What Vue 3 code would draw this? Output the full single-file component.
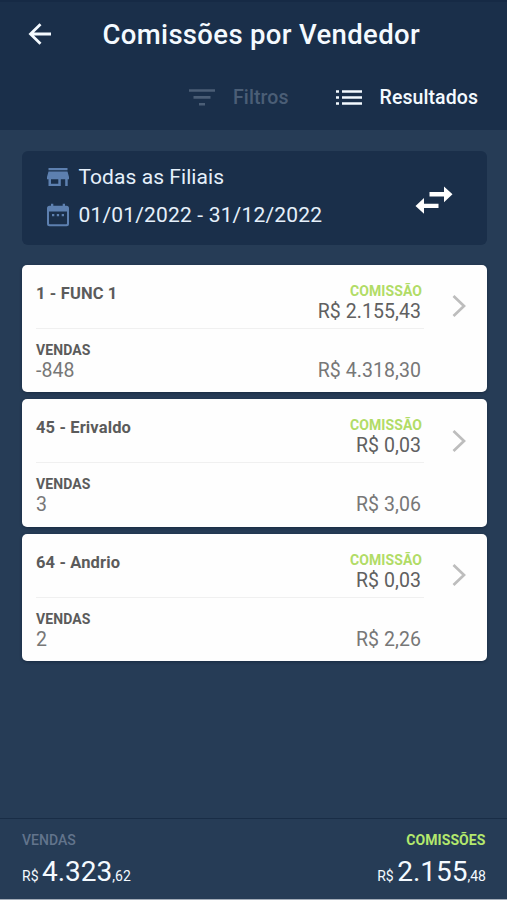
<script setup>
const sellers = [
  { name: '1 - FUNC 1', commission: 'R$ 2.155,43', count: '-848', total: 'R$ 4.318,30' },
  { name: '45 - Erivaldo', commission: 'R$ 0,03', count: '3', total: 'R$ 3,06' },
  { name: '64 - Andrio', commission: 'R$ 0,03', count: '2', total: 'R$ 2,26' },
]
</script>

<template>
  <div class="screen">
    <header class="header">
      <div class="titlebar">
        <svg class="back" viewBox="0 0 24 22" width="24" height="22">
          <path d="M12.5 1.2 2.5 11l10 9.8M2.5 11H23" fill="none" stroke="currentColor" stroke-width="2.8" />
        </svg>
        <h1 class="title">Comissões por Vendedor</h1>
      </div>
      <nav class="tabs">
        <div class="tab muted">
          <svg class="filter" viewBox="0 0 26 17" width="26" height="17">
            <path d="M0 1.5h26M4.5 8.4h17M10 15.3h6" fill="none" stroke="currentColor" stroke-width="2.6" />
          </svg>
          <span class="filter-label">Filtros</span>
        </div>
        <div class="tab">
          <svg class="list" viewBox="0 0 26 15" width="26" height="15">
            <path d="M0 1.5h3M6 1.5h20M0 7.5h3M6 7.5h20M0 13.5h3M6 13.5h20" fill="none" stroke="currentColor" stroke-width="2.7" />
          </svg>
          <span class="results-label">Resultados</span>
        </div>
      </nav>
    </header>

    <main class="content">
      <section class="summary">
        <div class="criteria">
          <div class="criterion">
            <svg viewBox="0 0 22 24" width="22" height="24">
              <path fill="currentColor" d="M1.5 3h19v2.2h-19zM1.5 6.5h19L22 12v2.2h-1.3V21h-2.5v-6.8h-4.4V21H1.5v-6.8H0V12zM4 14.2v4.5h7.3v-4.5z" fill-rule="evenodd" />
            </svg>
            <span class="branch">Todas as Filiais</span>
          </div>
          <div class="criterion">
            <svg viewBox="0 0 22 24" width="22" height="24">
              <path fill="currentColor" fill-rule="evenodd" d="M4 .8h2.3v2h9.4v-2H18v2h1.5A2.5 2.5 0 0 1 22 5.3v15.4a2.5 2.5 0 0 1-2.5 2.5h-17A2.5 2.5 0 0 1 0 20.7V5.3a2.5 2.5 0 0 1 2.5-2.5H4zM2 8.5v11.7c0 .6.4 1 1 1h16c.6 0 1-.4 1-1V8.5z" />
              <path fill="currentColor" d="M5 11h2.3v2.3H5zM9.8 11h2.3v2.3H9.8zM14.7 11H17v2.3h-2.3z" />
            </svg>
            <span class="period">01/01/2022 - 31/12/2022</span>
          </div>
        </div>
        <svg class="swap" viewBox="0 0 38 28" width="38" height="28">
          <path fill="#fff" d="M14.5 6.1H29V.4l8.5 7.9-8.5 7.900v-5.700H14.500zM23.500 17.700H9V12L.5 20 9 27.800v-5.700h14.500z" />
        </svg>
      </section>

      <ul class="cards">
        <li v-for="seller in sellers" :key="seller.name" class="card">
          <div class="details">
            <div class="row top">
              <span class="name">{{ seller.name }}</span>
              <div class="commission">
                <span class="label green">COMISSÃO</span>
                <span class="value strong">{{ seller.commission }}</span>
              </div>
            </div>
            <div class="row bottom">
              <div class="sales">
                <span class="label">VENDAS</span>
                <span class="value">{{ seller.count }}</span>
              </div>
              <span class="value">{{ seller.total }}</span>
            </div>
          </div>
          <svg class="chevron" viewBox="0 0 14 24" width="14" height="24">
            <path d="M1.5 2 12 12 1.5 22" fill="none" stroke="currentColor" stroke-width="2.7" />
          </svg>
        </li>
      </ul>
    </main>

    <footer class="footer">
      <div class="total">
        <span class="total-label">VENDAS</span>
        <span class="amount"><small>R$</small><b>4.323</b><small class="cents">,62</small></span>
      </div>
      <div class="total right">
        <span class="total-label lime">COMISSÕES</span>
        <span class="amount"><small>R$</small><b>2.155</b><small class="cents">,48</small></span>
      </div>
    </footer>
  </div>
</template>

<style>
body {
  margin: 0;
  background: #263c56;
}
</style>

<style scoped>
.screen {
  box-sizing: border-box;
  display: flex;
  flex-direction: column;
  height: 900px;
  overflow: hidden;
  border-bottom: 1px solid #a4adb9;
  background: #263c56;
  color: #f4faff;
  font-family: Roboto, sans-serif;
}
.header {
  box-sizing: border-box;
  height: 130px;
  border-top: 2px solid #162a45;
  background: #1a2f4a;
}
.titlebar {
  display: flex;
  align-items: center;
  height: 64px;
  padding-left: 28px;
}
.title {
  margin: 2px 0 0 50.5px;
  font-size: 27.5px;
  font-weight: 500;
  letter-spacing: 0.34px;
  line-height: 32px;
  white-space: nowrap;
}
.tabs {
  display: flex;
  justify-content: flex-end;
  gap: 47px;
  height: 62px;
  padding-right: 29px;
}
.tab {
  display: flex;
  align-items: center;
  font-size: 19.5px;
  font-weight: 500;
  letter-spacing: 0.08px;
}
.filter-label,
.results-label {
  margin-left: 18px;
}
.muted {
  color: #4b5e76;
}
.content {
  flex: 1;
  padding: 21px 20px 0 22px;
}
.summary {
  box-sizing: border-box;
  display: flex;
  align-items: center;
  justify-content: space-between;
  height: 94px;
  padding: 0 34px 4px 24.5px;
  border-radius: 6px;
  background: #1a2f4a;
}
.criterion {
  display: flex;
  align-items: center;
  gap: 10px;
  height: 37.5px;
  color: #5d80b0;
  font-size: 21px;
  white-space: nowrap;
}
.criterion span {
  color: #e5f0fb;
}
.branch {
  letter-spacing: 0.06px;
}
.period {
  letter-spacing: 0.17px;
}
.swap {
  margin-top: 7px;
}
.cards {
  display: flex;
  flex-direction: column;
  gap: 6.9px;
  margin: 19.8px 0 0;
  padding: 0;
  list-style: none;
}
.card {
  box-sizing: border-box;
  display: flex;
  height: 127.5px;
  padding-left: 14px;
  border-radius: 5px;
  background: #fefefe;
  box-shadow: 0 1px 3px rgba(10, 25, 45, 0.5);
  color: #5b5b5b;
}
.details {
  width: 388px;
}
.row {
  box-sizing: border-box;
  display: flex;
  justify-content: space-between;
  padding-right: 3px;
}
.top {
  height: 64px;
  padding-top: 17px;
  border-bottom: 1px solid #f0f0f0;
}
.bottom {
  align-items: flex-end;
  padding-top: 12px;
}
.name {
  font-size: 16.5px;
  font-weight: 700;
  letter-spacing: 0.13px;
  line-height: 23px;
}
.commission,
.sales {
  display: flex;
  flex-direction: column;
}
.commission {
  align-items: flex-end;
}
.label {
  font-size: 14px;
  font-weight: 700;
  letter-spacing: 0.08px;
  line-height: 19px;
}
.green {
  margin-right: -1px;
  color: #b1dc66;
}
.value {
  color: #777;
  font-size: 19.5px;
  letter-spacing: 0.06px;
  line-height: 22px;
}
.strong {
  color: #606060;
}
.chevron {
  margin: 29.7px 0 0 27.5px;
  color: #bdbdbd;
}
.footer {
  box-sizing: border-box;
  display: flex;
  justify-content: space-between;
  height: 81px;
  padding: 11px 21px 0 22px;
  border-top: 1px solid #192d46;
}
.total {
  display: flex;
  flex-direction: column;
}
.right {
  align-items: flex-end;
}
.total-label {
  color: #62748c;
  font-size: 14px;
  font-weight: 500;
  line-height: 20px;
}
.lime {
  margin-right: 0.5px;
  color: #b3e86d;
  font-weight: 700;
  letter-spacing: 0.08px;
}
.amount {
  display: flex;
  align-items: baseline;
  line-height: 43px;
}
.amount small {
  font-size: 14px;
}
.amount b {
  margin-left: 3.5px;
  font-size: 28px;
  font-weight: 400;
}
</style>
